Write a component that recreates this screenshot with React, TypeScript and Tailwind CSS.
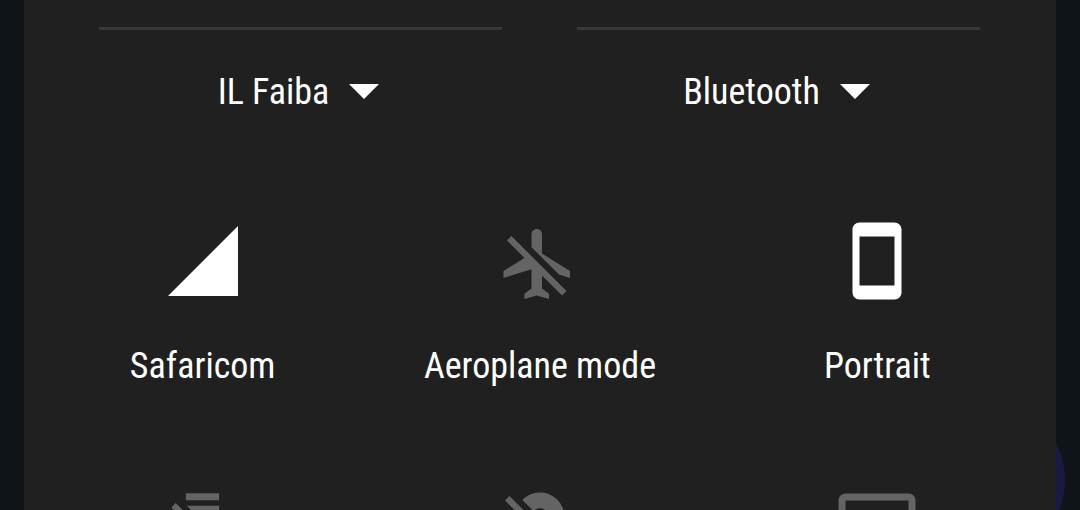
import type { ReactNode } from "react";

function Icon({ viewBox = "0 0 24 24", children }: { viewBox?: string; children: ReactNode }) {
  return (
    <svg viewBox={viewBox} className="size-[84px] fill-current" aria-hidden="true">
      {children}
    </svg>
  );
}

function DetailToggle({ label }: { label: string }) {
  return (
    <div className="flex-1 border-t-3 border-[#383838] pt-[41px]">
      <button type="button" className="mx-auto flex items-center gap-5 pr-1 text-white">
        <span>{label}</span>
        <svg viewBox="0 0 30 16" className="h-4 w-[30px] fill-current" aria-hidden="true">
          <path d="M0 0h30L15 15z" />
        </svg>
      </button>
    </div>
  );
}

function Tile({ label, active = false, icon }: { label?: string; active?: boolean; icon: ReactNode }) {
  return (
    <button type="button" aria-pressed={active} className="flex flex-col items-center gap-[42px]">
      <span className={active ? "text-white" : "text-[#646464]"}>{icon}</span>
      {label && <span className="whitespace-nowrap text-white">{label}</span>}
    </button>
  );
}

export default function App() {
  return (
    <div className="relative h-screen overflow-hidden bg-[#0e1417] px-6 font-['Roboto_Condensed','Liberation_Sans_Narrow',Roboto,sans-serif] text-[36px] leading-[42px]">
      <div className="absolute right-[15px] top-[400px] size-40 rounded-full bg-[#171b44]" />
      <main className="relative min-h-full bg-[#202020] pt-[27px]">
        <section className="flex gap-[75px] pl-[75px] pr-[76px]">
          <DetailToggle label="IL Faiba" />
          <DetailToggle label="Bluetooth" />
        </section>
        <section className="grid grid-cols-3 gap-y-24 px-[10px] pt-[106px]">
          <Tile
            label="Safaricom"
            active
            icon={
              <Icon>
                <path d="M2 22h20V2z" />
              </Icon>
            }
          />
          <Tile
            label="Aeroplane mode"
            icon={
              <Icon viewBox="0.43 -0.86 24 24">
                <path d="M13 9V3.5c0-.83-.67-1.5-1.5-1.5S10 2.67 10 3.5v3.68l7.83 7.83L21 16v-2l-8-5zM3 5.27l4.99 4.99L2 14v2l8-2.5V19l-2 1.5V22l3.5-1 3.5 1v-1.5L13 19v-3.73L18.73 21 20 19.73 4.27 4 3 5.27z" />
              </Icon>
            }
          />
          <Tile
            label="Portrait"
            active
            icon={
              <Icon>
                <path d="M17 1H7c-1.1 0-2 .9-2 2v18c0 1.1.9 2 2 2h10c1.1 0 2-.9 2-2V3c0-1.1-.9-2-2-2zm0 18H7V5h10v14z" />
              </Icon>
            }
          />
          <Tile
            icon={
              <Icon>
                <path d="M7.1 2.9h9.5v2H7.1zM7.4 6.5h9.2v2l-2 3v2.2zM4.2 5.7L3 7l6.4 6.4V21h5.2v-2.4l3.7 3.7 1.3-1.3z" />
              </Icon>
            }
          />
          <Tile
            icon={
              <Icon viewBox="0 -0.7 24 24">
                <path d="M12 6.5c1.38 0 2.5 1.12 2.5 2.5 0 .74-.33 1.39-.83 1.85l3.63 3.63c.98-1.86 1.7-3.8 1.7-5.48 0-3.87-3.13-7-7-7-1.98 0-3.76.83-5.04 2.15l3.19 3.19c.46-.52 1.11-.84 1.85-.84zm4.37 9.6l-4.63-4.63-.11-.11L3.27 3 2 4.27l3.18 3.18C5.07 7.95 5 8.47 5 9c0 5.25 7 13 7 13s1.67-1.85 3.38-4.35L18.73 21 20 19.73l-3.63-3.63z" />
              </Icon>
            }
          />
          <Tile
            icon={
              <Icon>
                <path d="M21 3H3c-1.1 0-2 .9-2 2v3h2V5h18v14h-7v2h7c1.1 0 2-.9 2-2V5c0-1.1-.9-2-2-2zM1 18v3h3c0-1.66-1.34-3-3-3zm0-4v2c2.76 0 5 2.24 5 5h2c0-3.87-3.13-7-7-7zm0-4v2c4.97 0 9 4.03 9 9h2c0-6.08-4.93-11-11-11z" />
              </Icon>
            }
          />
        </section>
      </main>
    </div>
  );
}
